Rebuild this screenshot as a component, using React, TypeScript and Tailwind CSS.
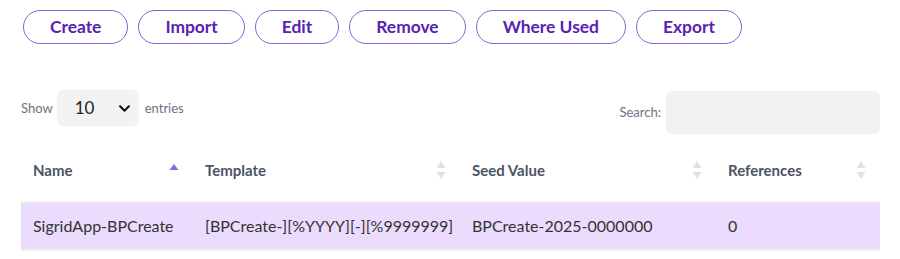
import { FaChevronDown } from "react-icons/fa";

const buttons = ["Create", "Import", "Edit", "Remove", "Where Used", "Export"];

function SortIcon({ active }: { active?: boolean }) {
    if (active) {
        return (
            <svg width="10" height="18" viewBox="0 0 10 18" className="shrink-0">
                <path d="M5 3 L9.5 9 L0.5 9 Z" fill="#7b72dc" />
            </svg>
        );
    }
    return (
        <svg width="10" height="20" viewBox="0 0 10 20" className="shrink-0">
            <path d="M5 1 L9.5 8 L0.5 8 Z" fill="#e2e2e2" />
            <path d="M5 19 L9.5 12 L0.5 12 Z" fill="#e2e2e2" />
        </svg>
    );
}

const columns = [
    { label: "Name", width: "w-[172px]", active: true },
    { label: "Template", width: "w-[267px]" },
    { label: "Seed Value", width: "w-[256px]" },
    { label: "References", width: "flex-1" },
];

export default function App() {
    return (
        <main className="w-[900px] h-[259px] bg-white font-['Lato',sans-serif] text-[#333]">
            {/* toolbar */}
            <div className="flex gap-[10px] pl-[23px] pt-[10px]">
                {buttons.map((b) => (
                    <button
                        key={b}
                        className="h-[34px] px-[26px] rounded-full border-[1.5px] border-[#8a5fd6] text-[#5a22b0] font-bold text-[17.4px] leading-none"
                    >
                        {b}
                    </button>
                ))}
            </div>

            {/* show / search */}
            <div className="flex items-start justify-between pl-[21px] pr-[20px] mt-[46px]">
                <div className="flex items-center text-[13px] text-[#6b7280] pt-[2px]">
                    <span>Show</span>
                    <div className="ml-[4px] mr-[6px] -mt-[2px] w-[82px] h-[36px] rounded-[6px] bg-[#f2f2f2] flex items-center justify-between pl-[18px] pr-[8px] text-[17px] text-[#222]">
                        <span>10</span>
                        <FaChevronDown className="text-[13px] text-[#111]" />
                    </div>
                    <span>entries</span>
                </div>
                <div className="flex items-center text-[13px] text-[#6b7280] mt-[1px]">
                    <span className="mr-[5px]">Search:</span>
                    <div className="w-[214px] h-[43px] rounded-[6px] bg-[#f2f2f2]" />
                </div>
            </div>

            {/* table */}
            <div className="mx-[21px] w-[859px] mt-[17px]">
                <div className="flex h-[52px] pb-[12px] items-center border-b-2 border-[#eeeeee] text-[15px] font-bold text-[#4b5563]">
                    {columns.map((c) => (
                        <div key={c.label} className={`${c.width} flex items-center justify-between pl-[12px] pr-[14px]`}>
                            <span>{c.label}</span>
                            <SortIcon active={c.active} />
                        </div>
                    ))}
                </div>
                <div className="flex h-[48px] items-center bg-[#ebdcfe] border-b-2 border-[#f0f0f0] text-[16px] text-[#333]">
                    <div className="w-[172px] pl-[12px]">SigridApp-BPCreate</div>
                    <div className="w-[267px] pl-[12px]">[BPCreate-][%YYYY][-][%9999999]</div>
                    <div className="w-[256px] pl-[12px]">BPCreate-2025-0000000</div>
                    <div className="flex-1 pl-[12px]">0</div>
                </div>
            </div>
        </main>
    );
}
